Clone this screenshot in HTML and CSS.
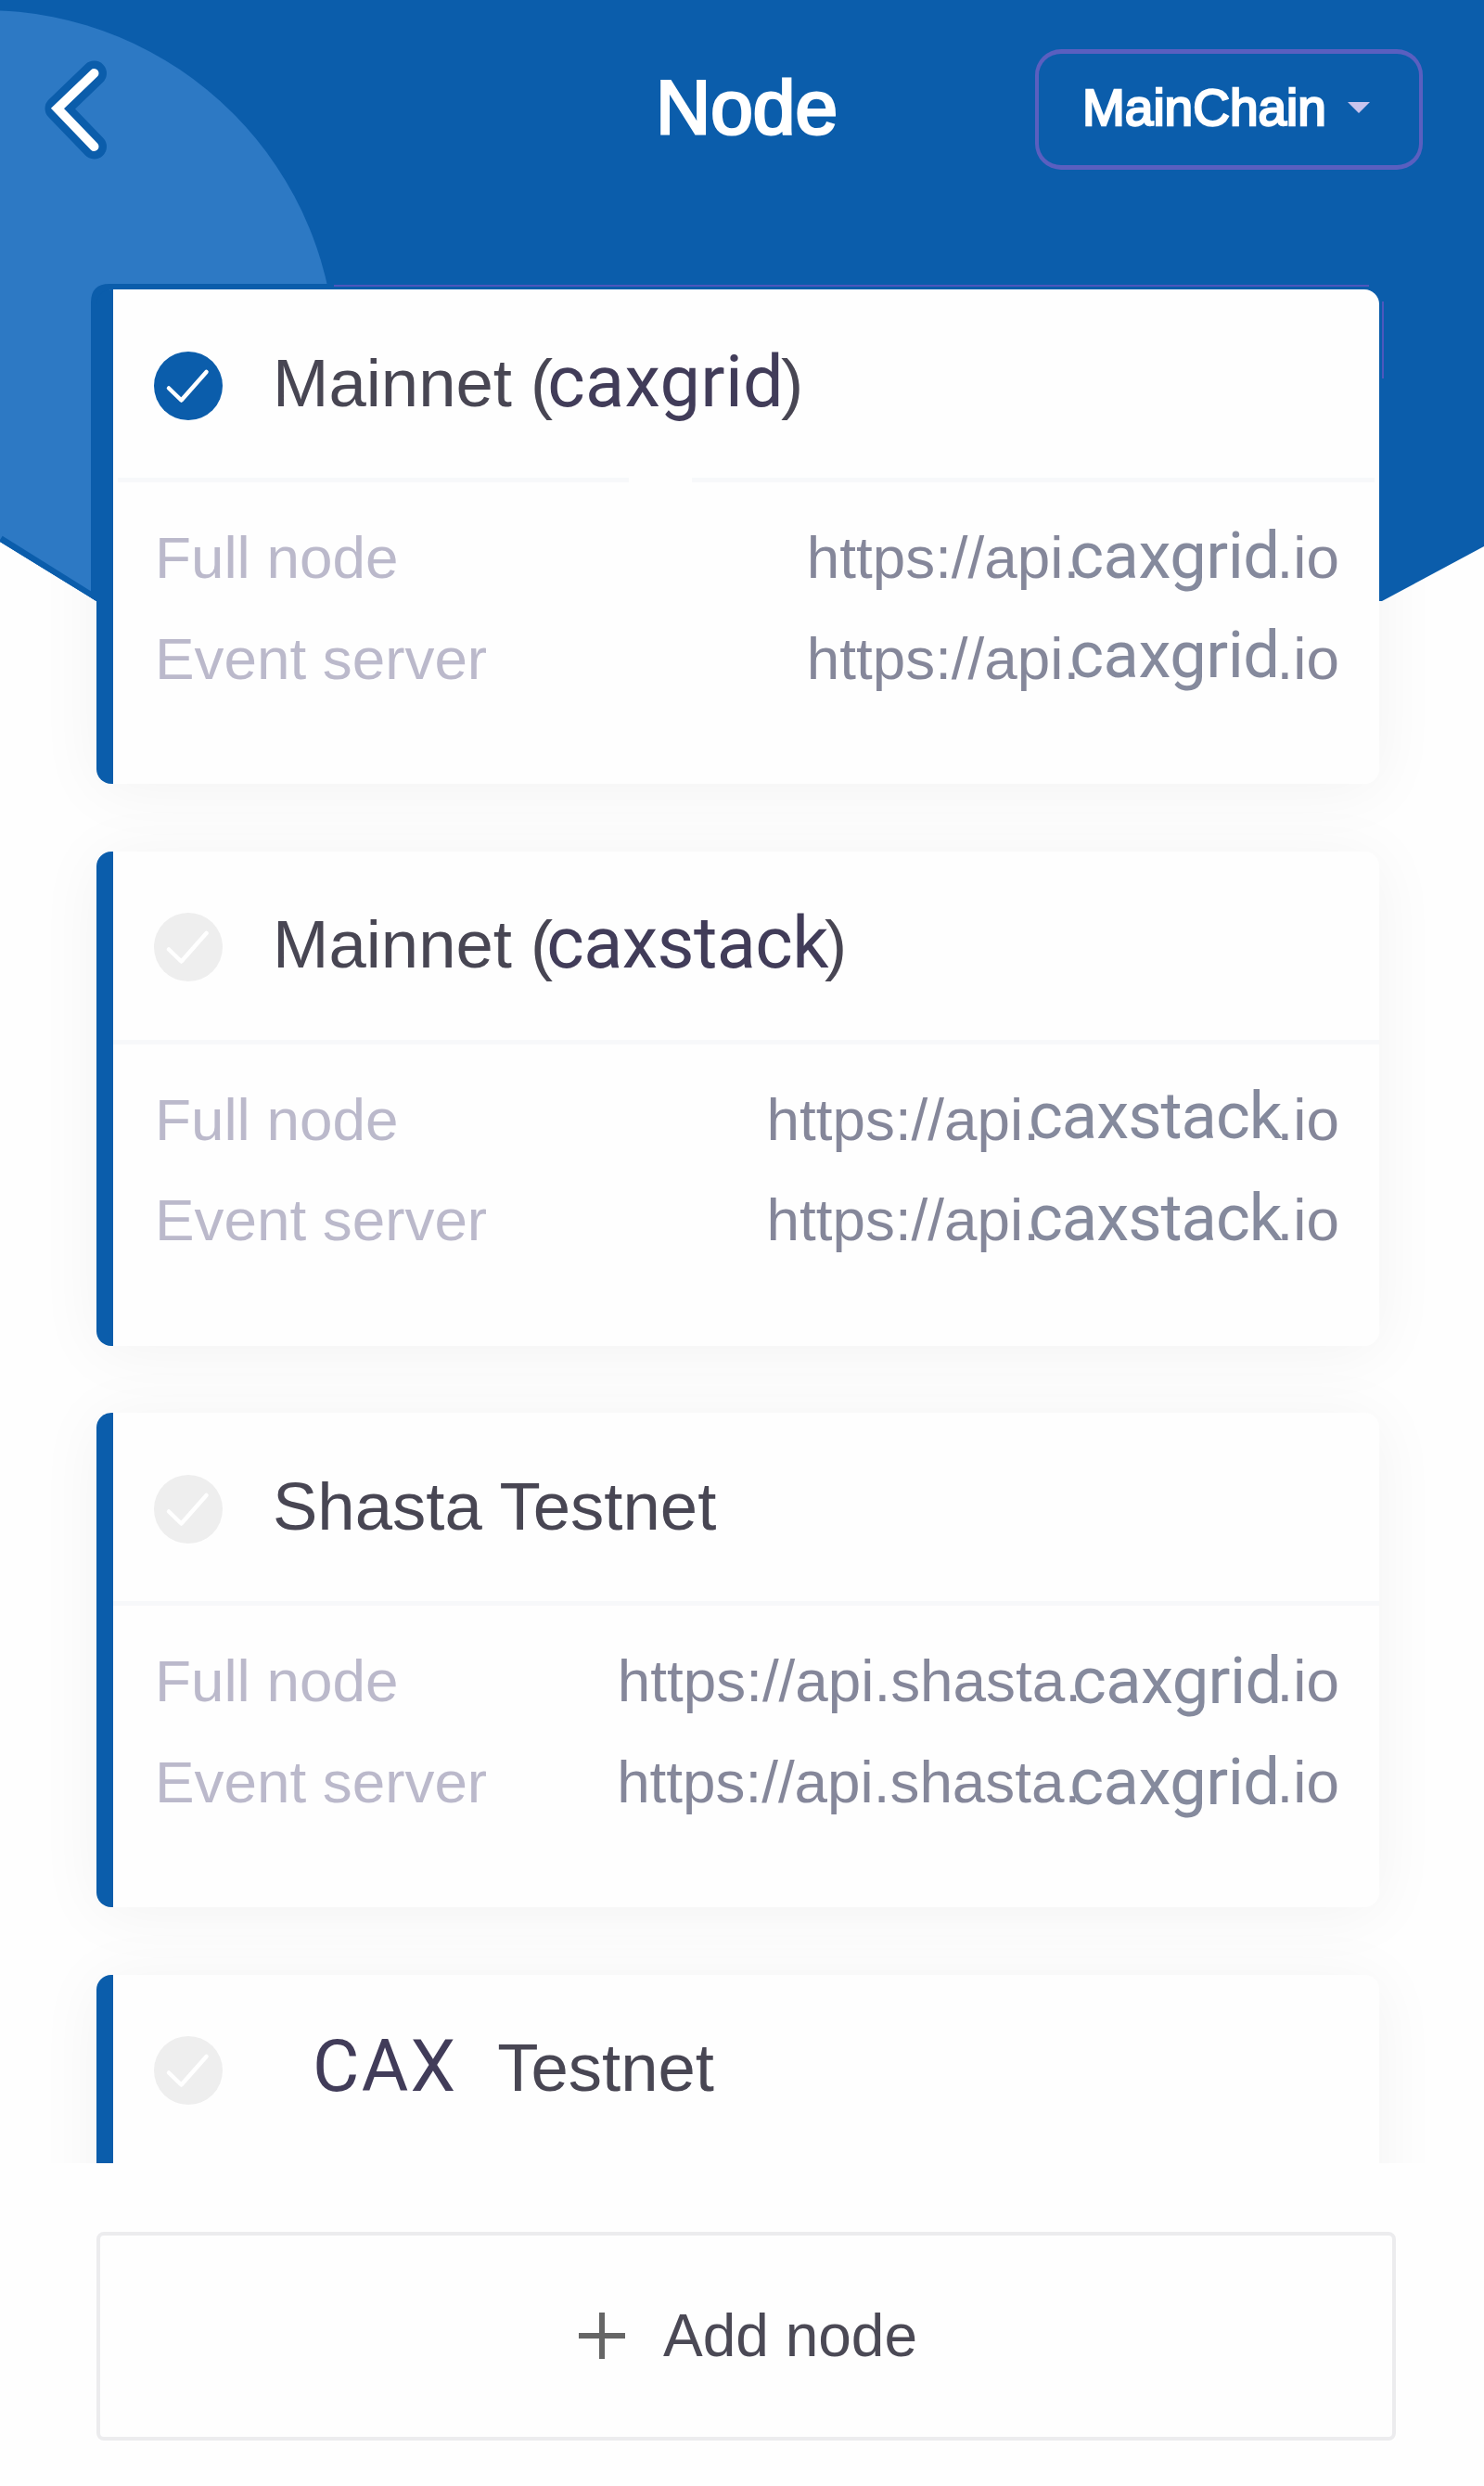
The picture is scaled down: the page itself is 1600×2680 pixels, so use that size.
FILE: index.html
```html
<!DOCTYPE html>
<html lang="en">
<head>
<meta charset="utf-8">
<title>Node</title>
<link rel="stylesheet" href="styles.css">
</head>
<body>
<svg class="symbols" aria-hidden="true">
  <symbol id="check" viewBox="0 0 74 74">
    <circle cx="37" cy="37" r="37" fill="currentColor"/>
    <path d="M16 39.500L29.500 52.500L56.500 22" fill="none" stroke="#fff" stroke-width="4.500" stroke-linecap="round" stroke-linejoin="round"/>
  </symbol>
</svg>
<div class="screen">
  <svg class="backdrop" viewBox="0 0 1600 660" aria-hidden="true">
    <defs><clipPath id="banner"><path d="M0 0H1600V589L1490 648H104L0 584Z"/></clipPath></defs>
    <g clip-path="url(#banner)">
      <path d="M0 0H1600V660H0Z" fill="#0b5dab"/>
      <circle cx="-17" cy="390" r="379" fill="#2d79c4"/>
      <path d="M0 582L104 647" stroke="#0b5dab" stroke-width="10"/>
      <path d="M98 660V326Q98 306 118 306H370V320H110V660Z" fill="#0b5dab"/>
      <path d="M360 308H1476M1491 325V408" stroke="#4d57bd" stroke-width="2" fill="none"/>
    </g>
  </svg>
  <header class="topbar">
    <svg class="back" viewBox="0 0 80 110" role="img" aria-label="Back">
      <path d="M54.500 17L15 55L54.500 96" fill="none" stroke="#0b5dab" stroke-width="27" stroke-linecap="round" stroke-linejoin="round"/>
      <path d="M54.500 17L15 55L54.500 96" fill="none" stroke="#fff" stroke-width="10" stroke-linecap="round" stroke-linejoin="miter"/>
    </svg>
    <h1 class="heading">Node</h1>
    <button class="chain" type="button"><span>MainChain</span><svg class="caret" viewBox="0 0 24 12"><path d="M0 0H24L12 12Z" fill="#c8c3ed"/></svg></button>
  </header>
  <main class="nodes">
    <section class="card selected">
      <div class="card-head"><svg class="tick"><use href="#check"/></svg><h2 class="title">Mainnet (<span class="brand grid">caxgrid</span>)</h2></div>
      <div class="rule broken"><i></i><i></i></div>
      <div class="row"><span class="label">Full node</span><span class="url">https://api.<span class="brand grid">caxgrid</span>.io</span></div>
      <div class="row"><span class="label">Event server</span><span class="url">https://api.<span class="brand grid raised">caxgrid</span>.io</span></div>
    </section>
    <section class="card">
      <div class="card-head"><svg class="tick"><use href="#check"/></svg><h2 class="title">Mainnet (<span class="brand stack">caxstack</span>)</h2></div>
      <div class="rule"></div>
      <div class="row"><span class="label">Full node</span><span class="url">https://api.<span class="brand stack raised">caxstack</span>.io</span></div>
      <div class="row"><span class="label">Event server</span><span class="url">https://api.<span class="brand stack">caxstack</span>.io</span></div>
    </section>
    <section class="card">
      <div class="card-head"><svg class="tick"><use href="#check"/></svg><h2 class="title">Shasta Testnet</h2></div>
      <div class="rule"></div>
      <div class="row"><span class="label">Full node</span><span class="url">https://api.shasta.<span class="brand shasta lowered">caxgrid</span>.io</span></div>
      <div class="row"><span class="label">Event server</span><span class="url">https://api.shasta.<span class="brand shasta-event lowered">caxgrid</span>.io</span></div>
    </section>
    <section class="card">
      <div class="card-head"><svg class="tick"><use href="#check"/></svg><h2 class="title"><span class="brand cax">CAX</span>Testnet</h2></div>
    </section>
  </main>
  <button class="add" type="button"><svg class="plus" viewBox="0 0 50 50"><path d="M0 25H50M25 0V50" stroke="#666" stroke-width="6"/></svg><span>Add node</span></button>
</div>
</body>
</html>
```
FILE: styles.css
```css
* { box-sizing: border-box; }
body { margin: 0; background: #fefefe; font-family: "Liberation Sans", Arial, sans-serif; }
h1, h2 { margin: 0; font-weight: 400; }
button { padding: 0; margin: 0; background: none; font-family: inherit; }
.symbols { display: none; }
.screen { position: relative; isolation: isolate; width: 1600px; height: 2680px; overflow: hidden; display: flex; flex-direction: column; }
.backdrop { position: absolute; left: 0; top: 0; width: 1600px; height: 660px; }

.topbar { position: relative; flex: none; height: 312px; display: flex; align-items: flex-start; }
.back { width: 80px; height: 110px; margin: 62px 0 0 47px; flex: none; overflow: visible; }
.heading { margin: 69px 0 0 580px; width: 409px; font-size: 82px; line-height: 94px; color: #fff; -webkit-text-stroke: 3px #fff; }
.chain { flex: none; width: 418px; height: 130px; margin-top: 53px; padding: 0 53px 4px 47px; display: flex; align-items: center; justify-content: space-between; border: 5px solid #5a5fc0; border-left-width: 4px; border-right-width: 4px; border-radius: 28px; font-size: 55px; color: #fff; -webkit-text-stroke: 2.4px #fff; }
.caret { width: 24px; height: 12px; }

.nodes { position: relative; flex: none; height: 2020px; overflow: hidden; display: flex; flex-direction: column; gap: 72.500px; padding: 0 113px 0 104px; }
.card { position: relative; flex: none; height: 533px; border-left: 18px solid #0b5dab; border-radius: 16px; background: #fefefe; }
/* The shadow sits beneath the banner so it never tints the blue */
.card::before { content: ""; position: absolute; z-index: -1; inset: 0 0 0 -18px; border-radius: 16px; box-shadow: 0 6px 70px rgba(0, 0, 0, .05); }
.card-head { height: 203px; display: flex; align-items: center; padding: 4px 0 0 44px; }
.tick { flex: none; width: 74px; height: 74px; color: #eee; }
.selected .tick { color: #0b5dab; }
.title { margin: -6px 0 0 54px; font-size: 72.500px; line-height: 90px; white-space: nowrap; color: #484653; }
.title .brand { font-size: 77.500px; line-height: 1px; color: #413c59; }
.brand { font-family: Roboto, sans-serif; }
.title .grid { margin: 0 -3px 0 -6px; letter-spacing: .3px; }
.title .stack { margin: 0 -4px 0 -7px; letter-spacing: -.6px; }
.title .cax { margin: 0 43px 0 43px; letter-spacing: 2.200px; }

.rule { height: 5px; margin-bottom: 27px; background: #f7f8fa; }
.broken { display: flex; gap: 68px; background: none; padding: 0 5px; }
.broken i { width: 551px; background: #f7f8fa; }
.broken i + i { flex: 1; width: auto; }
.row { height: 108.500px; display: flex; justify-content: space-between; padding: 0 43px 0 45px; font-size: 63.800px; line-height: 108px; white-space: nowrap; }
.label { color: #bbb9cb; }
.url { color: #85879a; }
.url .brand { font-size: 70.500px; line-height: 1px; color: #858a9d; letter-spacing: -.5px; }
.url .grid { margin: 0 -3px 0 -11px; }
.url .stack { margin: 0 -5px 0 -12px; letter-spacing: -1px; }
.url .shasta { margin: 0 -5px 0 -10px; letter-spacing: -.6px; }
.url .shasta-event { margin: 0 -3px 0 -12px; }
.raised { vertical-align: 2px; }
.lowered { vertical-align: -2px; }

.add { position: relative; flex: none; width: 1401px; height: 225px; margin: 74px 0 0 104px; padding: 0 0 1px 4px; border: 4px solid #ececee; border-radius: 8px; display: flex; align-items: center; justify-content: center; gap: 41px; font-size: 64px; color: #4b4955; }
.plus { width: 50px; height: 50px; }
```
